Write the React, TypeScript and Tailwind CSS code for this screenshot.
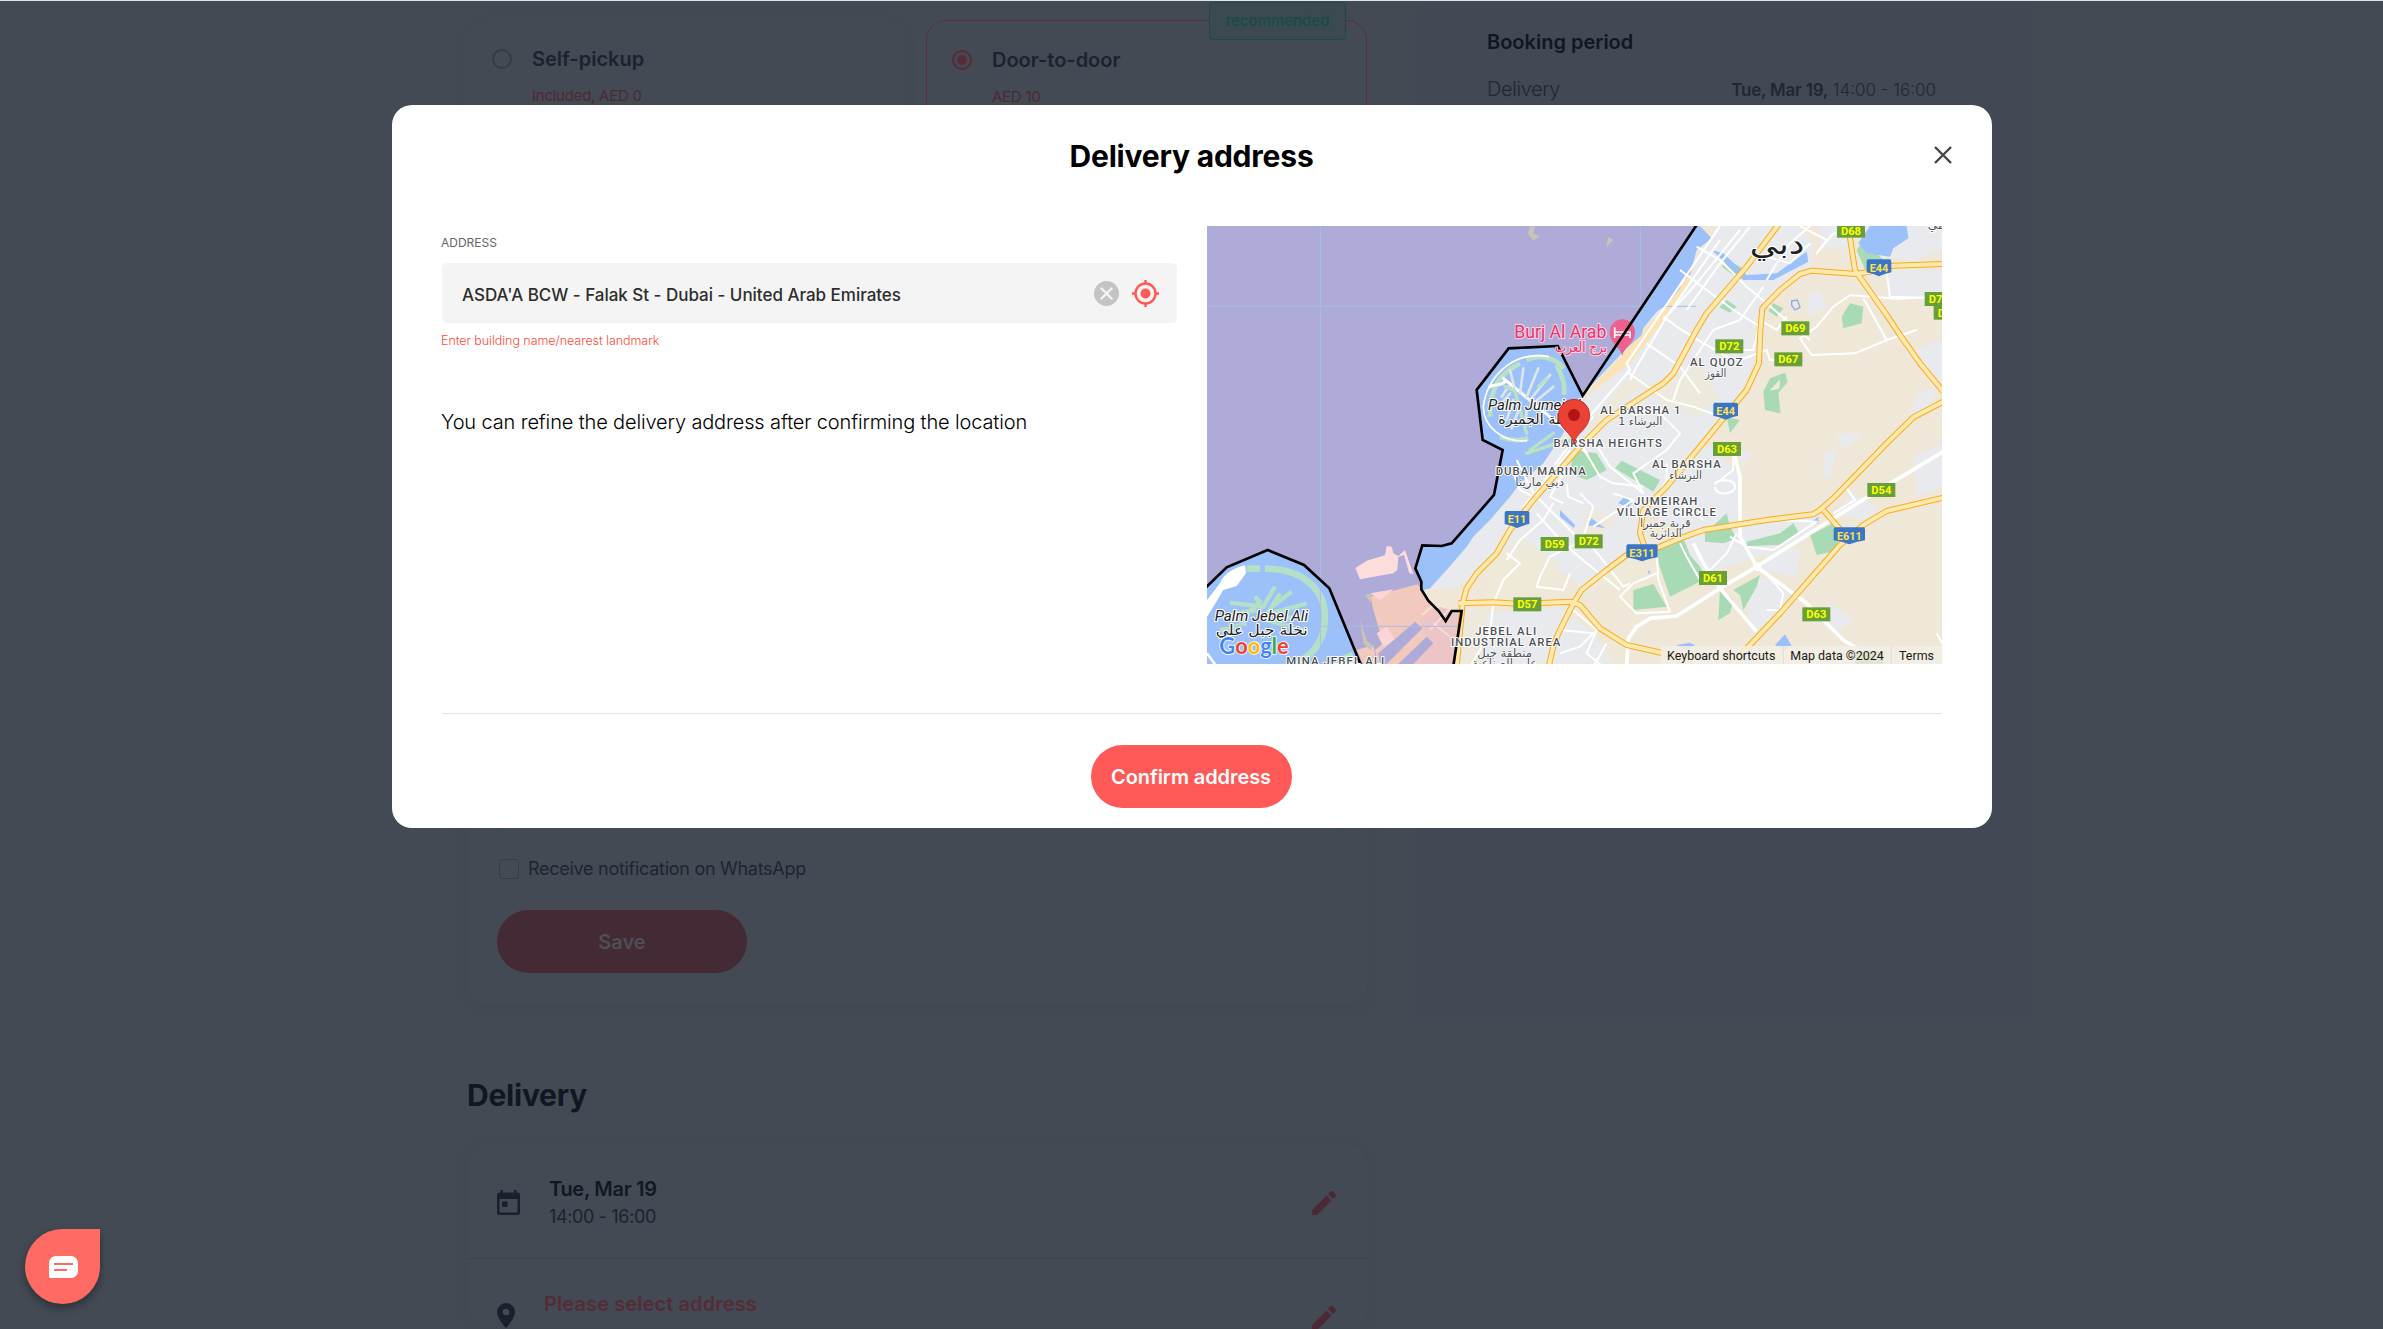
import type { ReactNode } from "react";

const arabic = '"DejaVu Sans", "Noto Sans", sans-serif';

function PencilIcon() {
  return (
    <svg className="size-6 shrink-0" viewBox="0 0 24 24" fill="#4b2932">
      <path d="M0 24v-5L14.5 4.5l5 5L5 24ZM16 3l2.4-2.4a1.9 1.9 0 0 1 2.7 0l2.3 2.3a1.9 1.9 0 0 1 0 2.7L21 8Z" />
    </svg>
  );
}

function CalendarIcon() {
  return (
    <svg className="h-[25px] w-[23px] shrink-0" viewBox="0 0 23 25">
      <path fill="#1a212d" fillRule="evenodd" d="M3.5 0H6v2.5h11V0h2.500v2.500H20.500A2.500 2.500 0 0 1 23 5v17.500a2.500 2.500 0 0 1-2.500 2.500h-18A2.500 2.500 0 0 1 0 22.500V5a2.500 2.500 0 0 1 2.500-2.500h1ZM2.500 9v13.500h18V9Z" />
      <path fill="#1a212d" d="M5 11.500h5.500V17H5z" />
    </svg>
  );
}

function PlaceIcon() {
  return (
    <svg className="h-[25px] w-[18px] shrink-0" viewBox="0 0 18 25">
      <path fill="#1a212d" fillRule="evenodd" d="M9 0a9 9 0 0 1 9 9c0 6.500-9 16-9 16S0 15.500 0 9a9 9 0 0 1 9-9Zm0 5.700a3.300 3.300 0 1 0 0 6.600 3.300 3.300 0 0 0 0-6.600Z" />
    </svg>
  );
}

function ClearIcon() {
  return (
    <svg className="size-[25px]" viewBox="0 0 25 25">
      <circle cx="12.500" cy="12.500" r="12.500" fill="#c4c4c4" />
      <path d="m7.500 7.500 10 10m0-10-10 10" stroke="#f4f4f4" strokeWidth="2.400" strokeLinecap="round" />
    </svg>
  );
}

function TargetIcon() {
  return (
    <svg className="size-[27px]" viewBox="0 0 27 27">
      <g fill="none" stroke="#ff5a58" strokeWidth="2.400">
        <circle cx="13.500" cy="13.500" r="10" />
        <path d="M13.500 0v4M13.500 23v4M0 13.500h4M23 13.500h4" />
      </g>
      <circle cx="13.500" cy="13.500" r="5" fill="#ff5a58" />
    </svg>
  );
}

/* ---------- map ---------- */

type Label = { x: number; y: number; t: string; w: number };

const areaLabels: Label[] = [
  { x: 1549, y: 438, t: "AL QUOZ", w: 158 },
  { x: 1321, y: 581, t: "AL BARSHA 1", w: 240 },
  { x: 1223, y: 681, t: "BARSHA HEIGHTS", w: 325 },
  { x: 1459, y: 744, t: "AL BARSHA", w: 206 },
  { x: 1022, y: 764, t: "DUBAI MARINA", w: 270 },
  { x: 1397, y: 854, t: "JUMEIRAH", w: 190 },
  { x: 1399, y: 888, t: "VILLAGE CIRCLE", w: 298 },
  { x: 917, y: 1244, t: "JEBEL ALI", w: 183 },
  { x: 917, y: 1278, t: "INDUSTRIAL AREA", w: 328 },
  { x: 406, y: 1334, t: "MINA JEBEL ALI", w: 294 },
];

const arabicLabels: Label[] = [
  { x: 1547, y: 470, t: "القوز", w: 64 },
  { x: 1321, y: 614, t: "البرشاء 1", w: 132 },
  { x: 1457, y: 777, t: "البرشاء", w: 98 },
  { x: 1019, y: 797, t: "دبي مارينا", w: 146 },
  { x: 1396, y: 920, t: "قرية جميرا", w: 152 },
  { x: 1397, y: 952, t: "الدائرية", w: 96 },
  { x: 914, y: 1310, t: "منطقة جبل", w: 164 },
  { x: 914, y: 1342, t: "علي الصناعية", w: 196 },
];

const greenShields: { x: number; y: number; t: string }[] = [
  { x: 1953, y: 32, t: "D68" },
  { x: 1786, y: 325, t: "D69" },
  { x: 1588, y: 379, t: "D72" },
  { x: 1765, y: 418, t: "D67" },
  { x: 2216, y: 237, t: "D72" },
  { x: 2243, y: 278, t: "D74" },
  { x: 1581, y: 687, t: "D63" },
  { x: 1064, y: 972, t: "D59" },
  { x: 1166, y: 964, t: "D72" },
  { x: 982, y: 1153, t: "D57" },
  { x: 1539, y: 1074, t: "D61" },
  { x: 1849, y: 1183, t: "D63" },
  { x: 2044, y: 810, t: "D54" },
];

const blueShields: { x: number; y: number; t: string; w: number }[] = [
  { x: 2037, y: 143, t: "E44", w: 74 },
  { x: 1577, y: 573, t: "E44", w: 74 },
  { x: 951, y: 898, t: "E11", w: 74 },
  { x: 1326, y: 998, t: "E311", w: 94 },
  { x: 1948, y: 947, t: "E611", w: 92 },
];

const highways = [
  "M1740 8 1640 140 1520 280 1490 330 1420 460 1390 490 1220 600 1140 680 1000 840 930 930 890 1000 830 1060 800 1105 788 1150 770 1340",
  "M2230 132 2080 137 2010 155 1970 162 1835 152 1800 162 1740 210 1687 265 1681 330 1677 430 1640 510 1500 680 1400 800 1330 870 1320 940 1338 992",
  "M1943 8 1965 150 1975 165 2060 285 2100 345 2160 430 2230 515",
  "M2230 545 2140 592 2060 670 1900 835 1860 870 1840 883 1700 900 1510 930 1440 955 1375 982 1280 1005 1220 1050 1145 1110 1120 1150 1080 1230 1062 1270 1046 1340",
  "M775 1150 880 1147 960 1152 1110 1145 1140 1155 1200 1225 1280 1275 1480 1320",
  "M2230 833 2060 873 1990 915 1920 975 1740 1180 1640 1285 1590 1340",
  "M1870 870 1920 928",
];

const whiteRoads = [
  "M2230 695 1980 845 1670 1040 1560 1105 1430 1188 1350 1195 1310 1220 1285 1255 1280 1340",
  "M1600 690 1620 770 1620 950 1670 1040 1820 1150 1930 1260 2010 1310",
  "M1480 970 1510 1030 1560 1105 1670 1235",
];

const minorRoads = [
  "M1560 18 1280 430 1290 450 1150 610 M1560 60 1400 290 1310 440 1290 480 M1620 30 1490 190 1390 300",
  "M1650 20 1560 130 1460 270 M1490 80 1560 120 1640 200 1700 250 1770 310 1830 360",
  "M1440 150 1520 210 1600 270 1680 320 M1390 290 1430 320 1510 370 1600 420 M1340 370 1440 440 1500 520",
  "M1280 455 1400 540 1480 560 1560 590 M1690 200 1620 300 1540 330 1440 480 1420 540",
  "M1830 18 1770 70 1730 130 1700 180 M1800 18 1880 60 1850 100 1900 40 1960 40 M1640 130 1700 110 1770 130 1830 70",
  "M2230 230 2090 236 1950 225 1900 260 1850 320 1800 355 1835 405 1965 400 2060 360 1990 235 M2060 160 2070 230 2230 235 M2060 360 2150 330",
  "M1620 420 1700 390 1710 420 1770 425 M1610 390 1660 390 1680 300 1730 330 1760 290",
  "M1180 660 1230 740 1330 820 1300 760 1400 690 1440 640 1360 560",
  "M1130 650 1200 770 1240 790 1330 800 M1140 820 1180 860 1150 950 1200 1010 1270 1100 1290 1090",
  "M1010 880 1090 970 1160 1030 1260 1110 M950 720 1000 820 1080 900 1140 960 M1060 850 1030 900 960 960 920 1020",
  "M1400 730 1400 780 1350 860 M1420 830 1510 900 M1600 690 1600 750 1560 780M1545 795C1545 775 1605 775 1605 800S1545 830 1545 800",
  "M1130 970 1050 1010 1020 1070 1010 1100 1090 1110 1110 1060 M920 1000 960 1030 910 1080 880 1150 870 1240 810 1340",
  "M1370 990 1375 1080 1410 1175 1310 1180 1260 1130 1300 1090 1370 1060 M1440 970 1460 1010 1500 1080 M1530 1050 1580 1000 1610 940",
  "M1590 950 1640 980 1720 990 1850 905 1740 900 M1690 1050 1750 1120 1740 1170 1700 1170",
  "M1900 830 1940 805 1965 840 1900 880 M1080 1230 1180 1240 1140 1280 1080 1300 M1120 1170 1190 1230 1160 1300 1210 1340 M1220 1270 1180 1340",
  "M2210 1240 2226 1270M1100 790 1105 830 1150 850M1240 820 1300 840 1180 920",
  "M940 760 960 810 1000 830 1060 740 1120 660 1180 590 M970 860 1040 780 1110 690 M1090 760 1050 830 1090 850",
];

function RoadMap() {
  return (
    <svg className="block h-[438px] w-[735px]" viewBox="21 18 2205 1314" preserveAspectRatio="none">
      <rect x="21" y="18" width="2205" height="1314" fill="#efe8d8" />

      {/* built-up areas */}
      <g fill="#e8eaed">
        <path d="M1560 18H1790L1840 70 1830 150 1760 190 1680 260 1660 340 1660 430 1620 520 1560 600 1490 690 1440 760 1330 850 1310 920 1370 980 1230 1060 1160 1120 1120 1080 1000 1000 900 1000 830 1060 760 1110 690 1105 800 960 880 860 960 770 1100 640 1170 520Z" />
        <path d="M1860 18 1950 18 1940 90 1860 80ZM2060 150 2230 150 2230 235 2070 230ZM2120 400 2226 360 2226 500ZM2150 520 2220 500 2170 580 2130 590ZM1860 210 1880 260 1830 290 1820 230Z" />
        <path d="M1400 730 1530 680 1620 760 1610 900 1480 930 1370 900ZM1440 960 1620 920 1860 880 1820 960 1640 1020 1580 1040 1480 1060ZM1700 1000 1800 980 1790 1070 1690 1050ZM1640 1090 1720 1070 1790 1130 1720 1200 1650 1240Z" />
        <path d="M880 1180 1080 1160 1180 1240 1240 1330 780 1332 800 1160ZM2140 710 2226 670 2226 800 2150 830ZM1870 700 1910 690 1890 780 1870 770ZM1890 1150 1960 1200 1910 1240 1840 1200ZM1910 640 1990 640 1930 690ZM1910 880 1960 820 2040 870 1990 900Z" />
        <path d="M1990 18H2226V90L2150 120 2010 110ZM1610 690 1650 700 1630 750Z" />
      </g>
      <path fill="#efe8d8" d="M1500 440 1560 530 1500 590 1400 560 1320 500ZM1170 860 1250 900 1180 960 1140 930ZM1150 1090 1290 1010 1340 1080 1240 1100ZM890 1010 960 950 1080 1030 1030 1120 850 1140ZM1300 460 1330 490 1190 620 1140 640ZM800 1170 860 1170 850 1330 780 1330Z" opacity=".8" />
      <path fill="#fbe3b6" d="M1500 95 1450 180 1400 260 1330 330 1270 400 1180 500 1170 520 1290 430 1400 290 1460 200Z" />

      {/* vegetation */}
      <g fill="#a8dab5">
        <path d="M1580 120 1640 150 1620 180 1565 140ZM1580 240 1610 260 1590 278 1558 262ZM1720 250 1750 265 1730 290 1705 272ZM1990 60 2050 120 2000 160 1970 90ZM1950 250 1990 260 1985 310 1930 325 1925 290Z" />
        <path fillRule="evenodd" d="M1755 458 1763 485 1735 520 1742 580 1695 570 1690 515 1710 475ZM1740 478 1708 512 1738 506Z" />
        <path d="M1265 722 1380 780 1360 815 1245 745ZM1120 690 1190 700 1220 750 1160 780 1110 760ZM1110 650 1130 640 1085 710ZM1370 990 1450 955 1470 1005 1500 1040 1515 1070 1490 1090 1410 1130 1365 1000Z" />
        <path d="M1515 940 1580 880 1590 920 1610 955 1570 970 1515 965ZM1640 965 1740 940 1780 910 1795 935 1740 975 1640 978ZM1830 945 1900 910 1920 990 1850 1005ZM1600 1110 1680 1065 1670 1100 1630 1170 1620 1125ZM1560 1105 1600 1140 1590 1180 1555 1200ZM1300 1110 1360 1092 1400 1160 1300 1170ZM1580 590 1620 600 1590 640Z" />
      </g>

      {/* sea, creek and lakes */}
      <g fill="#9cc0f9">
        <path d="M21 18H1500L1535 55 1490 90 1470 165 1445 185 1440 205 1400 255 1370 275 1330 325 1325 345 1280 385 1170 500 1130 560 1090 640 1030 730 960 790 930 830 870 900 820 950 800 980 740 1050 690 1105 664 1112 740 1340H21Z" />
        <path d="M1535 90 1570 100 1640 165 1730 160 1820 95 1825 125 1720 180 1630 180ZM1975 70 2010 18H2120L2125 55 2080 85 2070 110 2000 100ZM1080 870 1125 915 1122 925 1080 890ZM1175 895 1215 925 1160 915ZM1255 850 1275 828 1295 850 1285 862ZM1725 1275 1755 1243 1775 1278 1750 1290ZM1430 1275 1470 1268 1485 1275 1460 1290ZM1835 905 1855 890 1855 910ZM1343 1050 1351 1055 1347 1065Z" />
      </g>
      <path d="M1775 243 1792 240 1800 262 1785 270 1775 256Z" fill="none" stroke="#7fadf2" strokeWidth="4" />

      {/* Palm Jumeirah */}
      <g fill="none" strokeLinecap="round">
        <path d="M980 420C1020 400 1070 415 1090 445M1070 435C1090 480 1095 490 1092 525M960 430C900 460 870 500 870 590M900 650C940 665 970 660 985 655" stroke="#b9e2c4" strokeWidth="14" strokeLinecap="butt" />
        <path d="M1045 410C930 390 860 480 850 560 850 620 910 670 980 662" stroke="#fff" strokeWidth="5" />
        <path d="M910 475 1110 640 1160 700M870 500C890 490 900 500 915 485" stroke="#fff" strokeWidth="9" />
        <path d="M945 510 930 450M960 520 970 445M980 530 1015 445M990 540 1050 465M1000 550 1060 500M930 520 900 555M940 540 920 600M960 560 935 625M980 570 975 630M925 500 905 530" stroke="#dbe6e6" strokeWidth="8" />
        <path d="M945 515 980 640M1015 500 1040 475M940 510 915 500M1100 660 980 700M1060 640 990 690" stroke="#b9e2c4" strokeWidth="10" />
      </g>

      {/* Palm Jebel Ali */}
      <g fill="none">
        <path d="M195 1046C310 1046 375 1110 375 1190 375 1270 330 1320 260 1340M140 1046H180" stroke="#b4e0c8" strokeWidth="20" />
        <path d="M90 1148 190 1160 225 1100M120 1200 180 1145 165 1130M190 1200 240 1120M215 1160 275 1115M215 1180 320 1150M220 1195 325 1190M200 1200 310 1230M110 1180 170 1170M60 1230 140 1210" stroke="#b4e0c8" strokeWidth="13" />
      </g>
      <path fill="#fff" d="M60 1090C70 1060 110 1040 135 1036L138 1060 110 1098 70 1110 40 1160 21 1190V1140Z" />
      <path d="M21 1300 50 1340" stroke="#fff" strokeWidth="8" />
      <path fill="#b4e0c8" d="M420 1310 455 1295 470 1332H410Z" />

      {/* shaded service limit */}
      <path
        d="M21 18H1488L1148 527 1073 378 926 385 830 510 848 660 908 690 882 825 755 970 725 978 667 976 646 1045 664 1085V1108L685 1142 716 1173 737 1203 755 1173H785L760 1332H481L388 1105 312 1035 203 990 80 1042 21 1100Z"
        fill="#aeabd9"
      />
      <path fill="#ffdcdc" d="M466 1044 500 1022 555 1006 560 978 575 980 580 1000 595 1008 615 990 640 1062 628 1060 612 1005 595 1010 592 1050 580 1060 480 1078Z" />
      <path fill="#f1cabd" d="M512 1130 652 1093 664 1108 685 1142 716 1173 737 1203 755 1173H785L760 1332H535L525 1290 550 1270 520 1170Z" />
      <path fill="#fcd6d6" d="M512 1120 580 1108 540 1142ZM530 1240 560 1220 585 1260 550 1280Z" />
      <path fill="#ecc6c6" d="M660 1200 720 1160 780 1180 760 1332H640L690 1270Z" />
      <path fill="#f1cabd" d="M470 1290 520 1275 530 1332H490Z" />
      <path fill="#aeabd9" d="M535 1300 645 1205 667 1225 560 1332H540ZM595 1332 680 1250 700 1270 640 1332Z" />
      <path d="m665 1185 60-50M690 1230 750 1165M700 1210 750 1250" stroke="#fbdcd8" strokeWidth="5" fill="none" />
      <path fill="#c9c4b4" d="M990 20 1005 18 1000 40 1018 50 1000 62 984 40ZM1225 50 1240 60 1218 82ZM496 1125 515 1120 512 1150ZM480 1200 500 1260 520 1280 510 1290 490 1270Z" />
      <path d="M361 18V1332M21 259H1488M21 1219H361M361 1219H780M1321 18V259" stroke="#a9bce8" strokeWidth="3" fill="none" />

      {/* roads */}
      <g fill="none" stroke="#fff" strokeLinejoin="round">
        {minorRoads.map((d) => (
          <path key={d} d={d} strokeWidth="6" />
        ))}
        {whiteRoads.map((d) => (
          <path key={d} d={d} strokeWidth="11" />
        ))}
      </g>
      <circle cx="1672" cy="1040" r="13" fill="#fff" />
      <g fill="none" strokeLinejoin="round">
        {highways.map((d) => (
          <path key={d} d={d} stroke="#f9ab1c" strokeWidth="18" />
        ))}
        {highways.map((d) => (
          <path key={d} d={d} stroke="#ffe9ae" strokeWidth="12" />
        ))}
      </g>

      {/* hotel marker */}
      <path fill="#f0608f" d="M1267 408C1262 380 1229 372 1229 336a38 38 0 0 1 76 0c0 36-33 44-38 72Z" />
      <path fill="none" stroke="#fff" strokeWidth="5" d="M1244 322v32M1244 345h46M1290 334v20M1244 336h46" />

      <path
        fill="none"
        stroke="#000"
        strokeWidth="8"
        d="M1492 12 1148 527 1073 378 926 385 830 510 848 660 908 690 882 825 755 970 725 978 667 976 646 1045 664 1085V1108L685 1142 716 1173 737 1203 755 1173H785L760 1338M484 1338 388 1105 312 1035 203 990 80 1042 16 1104"
      />

      {/* place names */}
      <g fontFamily="Roboto" fill="#4d5156" stroke="#fff" strokeWidth="6" strokeLinejoin="round" paintOrder="stroke" textAnchor="middle">
        {areaLabels.map((l) => (
          <text key={l.t} x={l.x} y={l.y} fontSize="34" fontWeight="500" textLength={l.w}>
            {l.t}
          </text>
        ))}
        <g fontFamily={arabic}>
          {arabicLabels.map((l) => (
            <text key={l.t} x={l.x} y={l.y} fontSize="34" strokeWidth="4" textLength={l.w} lengthAdjust="spacingAndGlyphs">
              {l.t}
            </text>
          ))}
          <text x="1731" y="102" fontSize="86" fill="#202124" textLength="164" lengthAdjust="spacingAndGlyphs">دبي</text>
          <text x="2208" y="26" fontSize="34" textLength="50" lengthAdjust="spacingAndGlyphs">مي</text>
          <text x="1008" y="613" fontSize="42" fill="#202124" textLength="226" lengthAdjust="spacingAndGlyphs">نخلة الجميرة</text>
          <text x="185" y="1246" fontSize="42" fill="#202124" textLength="276" lengthAdjust="spacingAndGlyphs">نخلة جبل علي</text>
          <text x="1143" y="396" fontSize="42" fill="#e8336d" stroke="#fbd3e2" textLength="156" lengthAdjust="spacingAndGlyphs">برج العرب</text>
        </g>
        <text x="1081" y="353" fontSize="53" fill="#e8336d" stroke="#fbd3e2" textLength="276" lengthAdjust="spacingAndGlyphs">Burj Al Arab</text>
        <g fontStyle="italic" fill="#202124" fontSize="41">
          <text x="1010" y="571" textLength="292" lengthAdjust="spacingAndGlyphs">Palm Jumeirah</text>
          <text x="184" y="1203" textLength="280" lengthAdjust="spacingAndGlyphs">Palm Jebel Ali</text>
        </g>
      </g>

      {/* route shields */}
      <g fontFamily="Roboto" fontWeight="700" textAnchor="middle">
        {greenShields.map((s, i) => (
          <g key={i}>
            <rect x={s.x - 42} y={s.y - 21} width="84" height="42" fill="#689f38" />
            <text x={s.x} y={s.y + 12} fontSize="34" fill="#ffff00" textLength="60" lengthAdjust="spacingAndGlyphs">{s.t}</text>
          </g>
        ))}
        {blueShields.map((s, i) => (
          <g key={i}>
            <path
              transform={`translate(${s.x} ${s.y})`}
              d={s.w > 80 ? "M-44-25H44L47-20V14Q24 17 0 26-24 17-47 14V-20Z" : "M-34-25H34L37-20V14Q20 17 0 26-20 17-37 14V-20Z"}
              fill="#3a76c4"
            />
            <text x={s.x} y={s.y + 12} fontSize="34" fill="#ffe24d" textLength={s.w - 18} lengthAdjust="spacingAndGlyphs">{s.t}</text>
          </g>
        ))}
      </g>

      {/* selected location */}
      <path d="M1122 672C1117 637 1075 628 1075 585a47 47 0 0 1 94 0c0 43-42 52-47 87Z" fill="#ea4335" stroke="#c5221f" strokeWidth="2.500" />
      <circle cx="1122" cy="585" r="18" fill="#b31412" />

      {/* attribution */}
      <rect x="1966" y="1296" width="84" height="36" fill="#689f38" />
      <rect x="1383" y="1278" width="843" height="54" fill="#f3eee4" opacity=".88" />
      <path d="M1750 1278v54M2074 1278v54" stroke="#e4e0d5" strokeWidth="4" />
      <g fontFamily="Roboto" fontSize="37" fill="#1a1a1a">
        <text x="1401" y="1320" textLength="325" lengthAdjust="spacingAndGlyphs">Keyboard shortcuts</text>
        <text x="1771" y="1320" textLength="280" lengthAdjust="spacingAndGlyphs">Map data ©2024</text>
        <text x="2097" y="1320" textLength="105" lengthAdjust="spacingAndGlyphs">Terms</text>
      </g>
      <text x="58" y="1301" fontFamily="Lato" fontSize="70" fontWeight="700" stroke="#fff" strokeWidth="5" paintOrder="stroke" textLength="208" lengthAdjust="spacingAndGlyphs">
        <tspan fill="#4285f4">G</tspan>
        <tspan fill="#ea4335">o</tspan>
        <tspan fill="#fbbc04">o</tspan>
        <tspan fill="#4285f4">g</tspan>
        <tspan fill="#34a853">l</tspan>
        <tspan fill="#ea4335">e</tspan>
      </text>
    </svg>
  );
}

/* ---------- page behind the dialog ---------- */

function Radio({ on }: { on?: boolean }) {
  return (
    <span className={on ? "mt-0.5 flex size-5 items-center justify-center rounded-full border-2 border-[#572b36]" : "mt-0.5 size-5 rounded-full border-2 border-[#363b46]"}>
      {on && <span className="size-[10px] rounded-full bg-[#572b36]" />}
    </span>
  );
}

function Option({ on, title, price, children }: { on?: boolean; title: ReactNode; price: ReactNode; children?: ReactNode }) {
  return (
    <div
      className={
        on
          ? "relative flex h-[200px] w-[441px] gap-5 rounded-[20px] border border-[#5a2f3a] pl-[25px] pt-[27px]"
          : "flex h-[200px] w-[440px] gap-5 rounded-[20px] pl-[25px] pt-[27px] shadow-[0_0_16px_rgba(0,0,0,0.03)]"
      }
    >
      <Radio on={on} />
      <div className="whitespace-nowrap">
        <div className="text-[20px] leading-6 font-semibold text-[#1a232f]">{title}</div>
        <div className="mt-[15px] text-[15px] leading-5 tracking-[-0.25px] text-[#4d2934]">{price}</div>
      </div>
      {children}
    </div>
  );
}

function BookingPage() {
  return (
    <div className="flex h-full bg-[#434a54]">
      <main className="ml-[412px] w-[1005px] shrink-0 border-l border-[#434b54] pl-[54px]">
        <div className="flex gap-[19px] pt-[19px]">
          <Option title="Self-pickup" price="Included, AED 0" />
          <Option on title="Door-to-door" price="AED 10">
            <span className="absolute right-[20px] -top-[19px] flex h-[38px] w-[137px] items-center justify-center rounded-[4px] border border-[#1d4a46] bg-[#3a4a50] text-[15px] font-medium text-[#1a4a42]">
              recommended
            </span>
          </Option>
        </div>

        <div className="mt-5 flex h-[764px] w-[900px] flex-col items-start justify-end rounded-[20px] px-[30px] pb-[31px] shadow-[0_4px_18px_rgba(0,0,0,0.045)]">
          <div className="h-[200px] w-[840px] rounded-[5px] border border-[#3f4a52]" />
          <label className="mt-5 flex h-[20px] items-center gap-[9px] pl-[2px] text-[18px] leading-5 tracking-[-0.28px] text-[#1c2530]">
            <span className="size-5 rounded-[3px] border border-[#373d48]" />
            Receive notification on WhatsApp
          </label>
          <div className="mt-[31px] flex h-[63px] w-[250px] items-center justify-center rounded-full bg-[#432a34] text-[20px] font-semibold text-[#4f4e58]">Save</div>
        </div>

        <h2 className="mt-[73px] text-[30px] leading-9 font-bold tracking-[-0.23px] text-[#101721]">Delivery</h2>

        <div className="mt-[32px] w-[900px] rounded-[20px] shadow-[0_0_18px_rgba(0,0,0,0.045)]">
          <div className="flex h-[114px] items-center border-b border-[#3b424c] pt-0.5 pr-[31px] pl-[30px]">
            <CalendarIcon />
            <div className="ml-[29px] grow whitespace-nowrap">
              <div className="text-[20px] leading-6 font-semibold tracking-[-0.3px] text-[#111822]">Tue, Mar 19</div>
              <div className="mt-[4px] text-[18px] leading-6 tracking-[-0.36px] text-[#1b232e]">14:00 - 16:00</div>
            </div>
            <PencilIcon />
          </div>
          <div className="flex h-[69px] pt-[33px] pr-[31px] pl-[30px]">
            <div className="mt-[11px]">
              <PlaceIcon />
            </div>
            <div className="ml-[29px] grow whitespace-nowrap">
              <div className="text-[20px] leading-6 font-semibold tracking-[0.1px] text-[#542c37]">Please select address</div>
            </div>
            <div className="mt-[14px]">
              <PencilIcon />
            </div>
          </div>
        </div>
      </main>

      <aside className="h-[1016px] w-[615px] bg-[#424954] pt-[29px] pl-[70px]">
        <div className="text-[20px] leading-6 font-semibold text-[#101722]">Booking period</div>
        <div className="mt-[23px] flex w-[449px] items-baseline justify-between whitespace-nowrap text-[#1f2732]">
          <span className="text-[20px] leading-6 font-light tracking-[-0.4px]">Delivery</span>
          <span className="text-[17px] leading-6 font-light">
            <b className="font-semibold tracking-[-0.2px]">Tue, Mar 19,</b> 14:00 - 16:00
          </span>
        </div>
      </aside>
    </div>
  );
}

/* ---------- dialog ---------- */

function AddressDialog() {
  return (
    <section className="absolute top-[105px] left-[392px] flex h-[723px] w-[1600px] flex-col rounded-[20px] bg-white px-[50px]">
      <header className="relative flex h-[121px] shrink-0 justify-center pt-[33px]">
        <h1 className="-ml-px text-[30px] leading-9 font-bold tracking-[-0.2px] text-black">Delivery address</h1>
        <svg className="absolute top-[41px] -right-[10px] size-[18px]" viewBox="0 0 18 18">
          <path d="m1 1 16 16M17 1 1 17" stroke="#444" strokeWidth="2.400" />
        </svg>
      </header>

      <div className="flex justify-between">
        <div className="w-[735px]">
          <div className="mt-[9px] -ml-px text-[12px] leading-4 text-[#666]">ADDRESS</div>
          <div className="mt-3 flex h-[60px] items-center rounded-[5px] bg-[#f4f4f4] pr-[18px] pl-5">
            <span className="grow pt-[3px] text-[17px] leading-6 font-medium tracking-[-0.02px] text-[#2d2d2d]">ASDA'A BCW - Falak St - Dubai - United Arab Emirates</span>
            <ClearIcon />
            <span className="ml-[13px]">
              <TargetIcon />
            </span>
          </div>
          <div className="mt-[10px] -ml-px text-[12.500px] leading-4 font-light tracking-[-0.06px] text-[#ff4a36]">Enter building name/nearest landmark</div>
          <p className="mt-[59px] -ml-px text-[20px] leading-7 font-light tracking-[-0.14px] text-black">You can refine the delivery address after confirming the location</p>
        </div>
        <RoadMap />
      </div>

      <footer className="mt-[49px] flex grow justify-center border-t-[1.5px] border-[#e6e6e6] pt-[31px]">
        <button className="-ml-[2px] h-[63px] w-[201px] rounded-full bg-[#ff5a58] text-[20px] font-semibold tracking-[-0.08px] text-white">Confirm address</button>
      </footer>
    </section>
  );
}

export default function App() {
  return (
    <div className="relative h-[1329px] w-full overflow-hidden border-t border-[#dfe4e5] bg-[#434a54] font-['Inter',sans-serif]">
      <BookingPage />
      <div className="absolute inset-0 -top-px">
        <AddressDialog />
        <div className="absolute top-[1229px] left-[25px] flex size-[75px] items-center justify-center rounded-full rounded-tr-[8px] bg-[#ff6a63] shadow-[0_4px_8px_rgba(0,0,0,0.35)]">
          <svg className="ml-[2px] h-[22px] w-[29px]" viewBox="0 0 29 22">
            <path fill="#fff" d="M7 0h15a7 7 0 0 1 7 7v8a7 7 0 0 1-7 7H1.500A1.500 1.500 0 0 1 0 20.500V7a7 7 0 0 1 7-7Z" />
            <path d="M5 8h19M5 14h13" stroke="#ff6a63" strokeWidth="2" />
          </svg>
        </div>
      </div>
    </div>
  );
}
